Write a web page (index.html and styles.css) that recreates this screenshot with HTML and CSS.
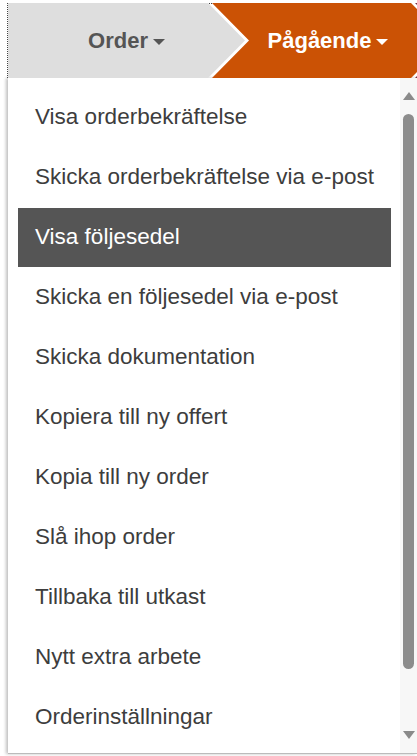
FILE: index.html
```html
<!DOCTYPE html>
<html lang="sv">

<head>
    <meta charset="UTF-8">
    <meta name="viewport" content="width=device-width, initial-scale=1.0">
    <title>Order</title>
    <link rel="stylesheet" href="styles.css">
</head>

<body>
    <div class="page">
        <div class="crumbs">
            <div class="crumb crumb-first">Order<span class="caret"></span></div>
            <div class="crumb crumb-active">Pågående<span class="caret caret-light"></span></div>
            <div class="crumb crumb-next"></div>
        </div>

        <div class="dropdown">
            <ul class="menu">
                <li>Visa orderbekräftelse</li>
                <li>Skicka orderbekräftelse via e-post</li>
                <li class="selected">Visa följesedel</li>
                <li>Skicka en följesedel via e-post</li>
                <li>Skicka dokumentation</li>
                <li>Kopiera till ny offert</li>
                <li>Kopia till ny order</li>
                <li>Slå ihop order</li>
                <li>Tillbaka till utkast</li>
                <li>Nytt extra arbete</li>
                <li>Orderinställningar</li>
            </ul>
            <div class="scrollbar">
                <span class="arrow arrow-up"></span>
                <span class="thumb"></span>
                <span class="arrow arrow-down"></span>
            </div>
        </div>
    </div>
</body>

</html>
```

FILE: styles.css
```css
html,
body {
    margin: 0;
    overflow: hidden;
    background-color: #fff;
}

body {
    font-family: Arial, "Liberation Sans", Helvetica, sans-serif;
    width: 417px;
    height: 756px;
}

.page {
    padding: 3px 0 0 7px;
}

/* breadcrumb arrows */
.crumbs {
    position: relative;
    display: flex;
    width: 409px;
    height: 75px;
    border-left: 1px dotted #444;
    overflow: hidden;
}

.crumbs::before {
    content: "";
    position: absolute;
    top: 0;
    left: 0;
    width: 204px;
    border-top: 1px dotted #444;
}

.crumb {
    flex: none;
    display: flex;
    align-items: center;
    justify-content: center;
    height: 75px;
    font-size: 22px;
    font-weight: bold;
    clip-path: polygon(0 0, calc(100% - 37px) 0, 100% 50%, calc(100% - 37px) 100%, 0 100%);
}

.crumb-first {
    width: 237px;
    background-color: #dedede;
    color: #555;
}

.crumb-active,
.crumb-next {
    width: 236px;
    margin-left: -33px;
    clip-path: polygon(0 0, calc(100% - 37px) 0, 100% 50%, calc(100% - 37px) 100%, 0 100%, 37px 50%);
}

.crumb-active {
    padding-right: 4px;
    box-sizing: border-box;
    background-color: #cb5205;
    color: #fff;
}

.crumb-next {
    background-color: #7b2d3f;
}

.caret {
    display: inline-block;
    margin-left: 5px;
    margin-top: 2px;
    border-left: 6px solid transparent;
    border-right: 6px solid transparent;
    border-top: 6px solid #555;
}

.caret-light {
    border-top-color: #fff;
}

/* dropdown menu */
.dropdown {
    display: flex;
    width: 409px;
    height: 676px;
    margin-left: 1px;
    border-bottom: 1px solid #bbb;
    box-shadow: -2px 0 3px rgba(0, 0, 0, 0.25);
    box-sizing: border-box;
    background-color: #fff;
    overflow: hidden;
}

.menu {
    list-style: none;
    margin: 0;
    padding: 10px 0 0 10px;
    width: 373px;
    flex: none;
}

.menu li {
    height: 60px;
    line-height: 58px;
    padding-left: 17px;
    font-size: 22.5px;
    color: #3d3d3d;
    white-space: nowrap;
}

.menu li.selected {
    background-color: #555;
    color: #fff;
    height: 59px;
    margin-bottom: 1px;
}

.scrollbar {
    flex: none;
    display: flex;
    flex-direction: column;
    align-items: center;
    width: 17px;
    margin-left: 9px;
    background-color: #f7f7f7;
    padding: 14px 0 0 0;
}

.arrow {
    border-left: 6px solid transparent;
    border-right: 6px solid transparent;
}

.arrow-up {
    border-bottom: 8px solid #8a8a8a;
}

.arrow-down {
    border-top: 8px solid #8a8a8a;
    margin-top: 62px;
}

.thumb {
    width: 11px;
    height: 555px;
    margin-top: 14px;
    border-radius: 6px;
    background-color: #8c8c8c;
}
```
